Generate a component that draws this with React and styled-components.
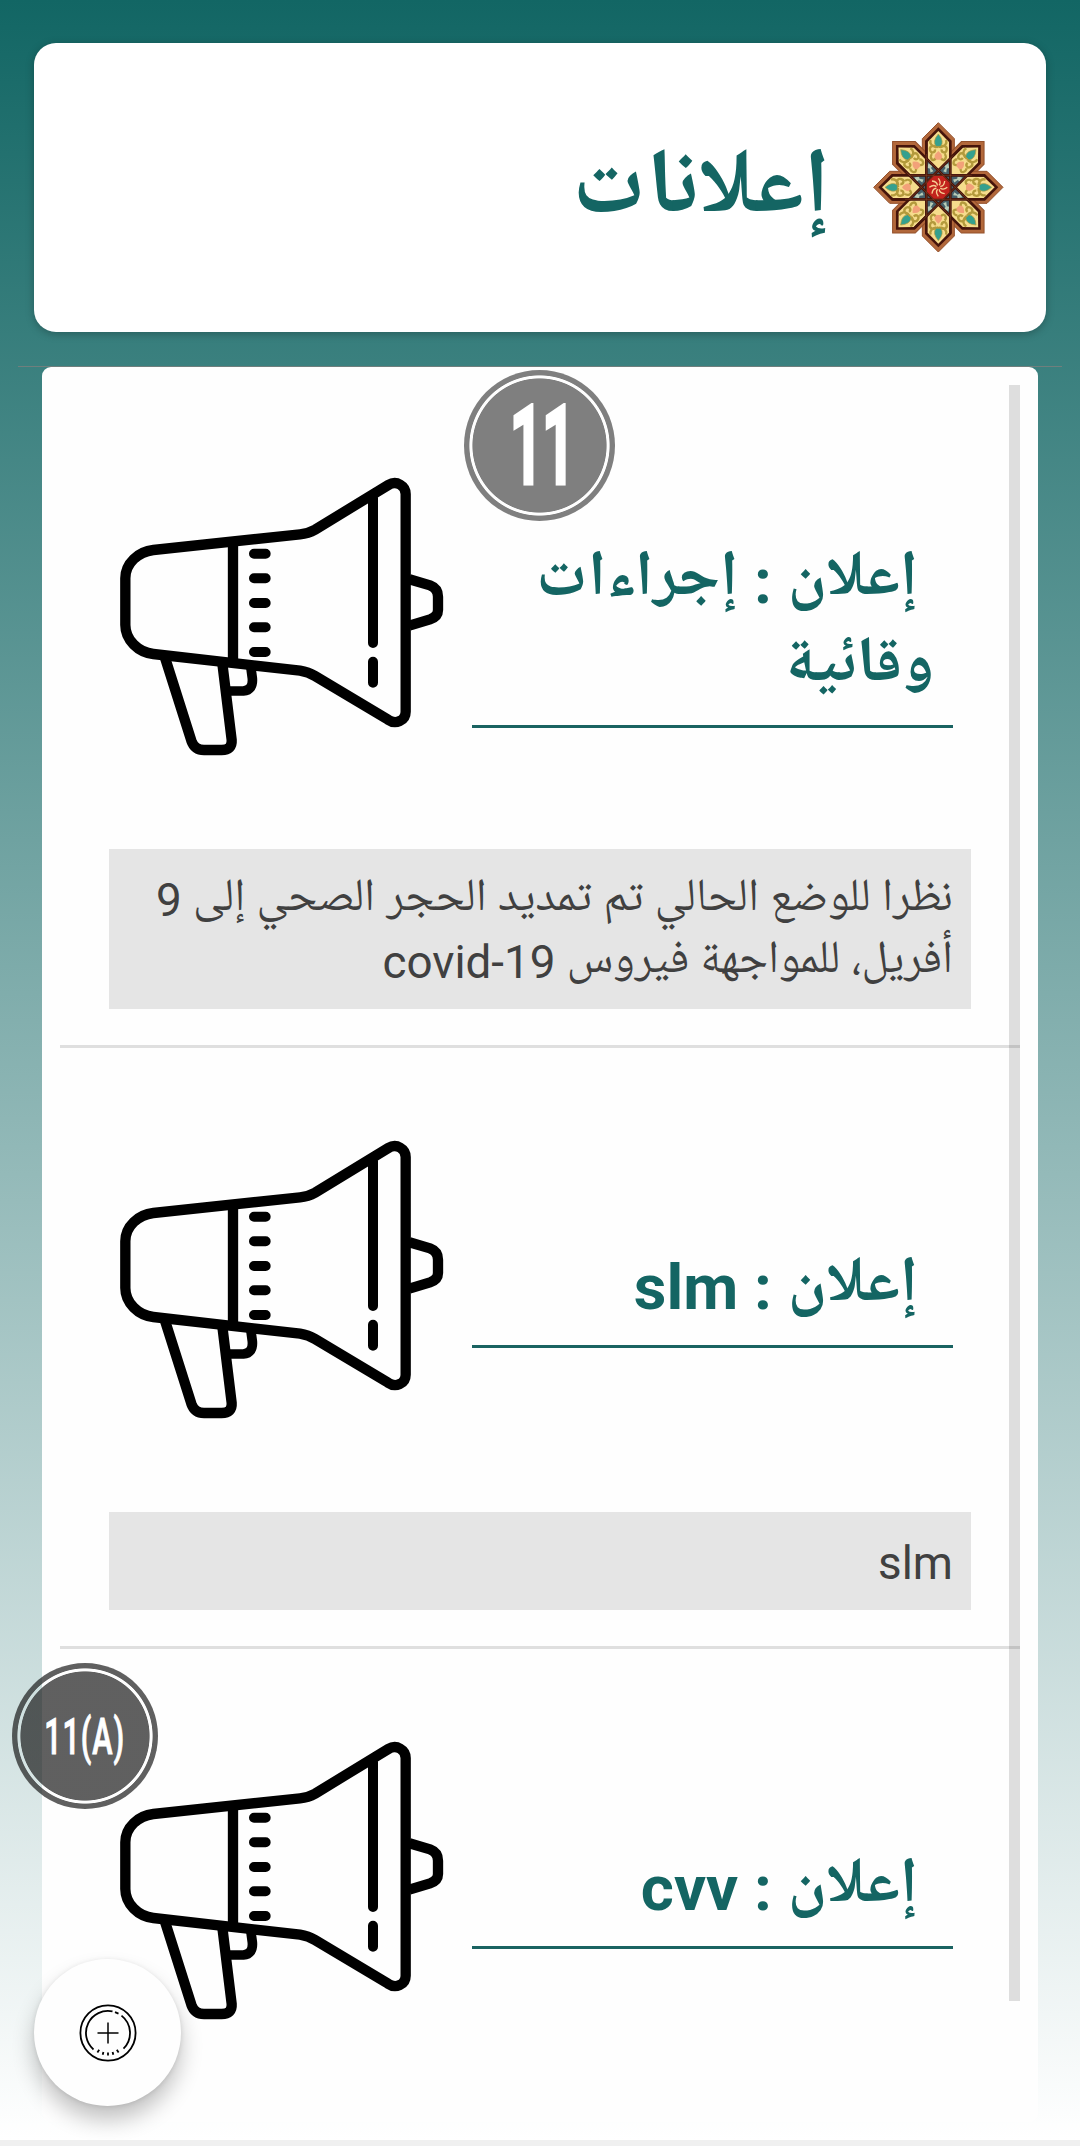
import React from "react";
import styled, { createGlobalStyle } from "styled-components";

const TEAL = "#146563";

const GlobalStyle = createGlobalStyle`
  * { box-sizing: border-box; }
  body { margin: 0; background: #f0f0f0; }
`;

const Page = styled.div`
  position: relative;
  display: flex;
  flex-direction: column;
  width: 1080px;
  height: 2146px;
  overflow: hidden;
  border-bottom: 6px solid #f0f0f0;
  background: linear-gradient(#126664, #ffffff);
  font-family: Roboto, "Noto Naskh Arabic", "Noto Sans Arabic", "DejaVu Sans", sans-serif;
`;

const Header = styled.header`
  display: flex;
  align-items: flex-start;
  gap: 30px;
  flex: none;
  height: 289px;
  margin: 43px 34px 0;
  padding: 67px 31px 0;
  border-radius: 22px;
  background: #fff;
  box-shadow: 0 2px 8px rgba(0, 0, 0, 0.25);
`;

const HeaderTitle = styled.h1`
  margin: 11px 0 0;
  color: ${TEAL};
  font-size: 92px;
  font-weight: 700;
  line-height: 120px;
`;

const Rule = styled.div`
  flex: none;
  height: 1px;
  margin: 34px 18px 0;
  background: #6f7f7d;
`;

const Panel = styled.main`
  position: relative;
  flex: none;
  height: 1755px;
  margin: 0 42px;
  padding: 18px 18px 0;
  border-radius: 9px;
  overflow: hidden;
  background: #fefefe;
`;

const ScrollThumb = styled.div`
  position: absolute;
  top: 18px;
  right: 18px;
  width: 11px;
  height: 1616px;
  background: rgba(0, 0, 0, 0.125);
`;

const Item = styled.article`
  display: flex;
  flex-direction: column;
  padding-top: 65px;
  border-bottom: 3px solid #dfdfdf;

  &:last-of-type {
    border-bottom: 0;
  }
`;

const ItemHead = styled.div`
  display: flex;
  align-items: center;
  gap: 12px;
  height: 320px;
  padding-right: 67px;
`;

const ItemTitle = styled.h2`
  width: 481px;
  margin: 0;
  padding: 47px 19px 14px 0;
  border-bottom: 3px solid #1a6361;
  color: ${TEAL};
  font-size: 63.5px;
  font-weight: 700;
  line-height: 86px;
`;

const Line = styled.div`
  padding-right: ${(p) => p.$indent || 0}px;
  white-space: pre;
`;

const Arabic = styled.span`
  font-size: ${(p) => p.$size}px;
  line-height: 0;
  vertical-align: ${(p) => p.$lift || 0}px;
`;

const Message = styled.div`
  margin: 79px 49px 36px;
  padding: 21px 18px 15px;
  background: #e5e5e5;
  color: #404040;
  font-size: 45.8px;
  line-height: 62px;
`;

const Badge = styled.div`
  position: absolute;
  left: ${(p) => p.$x}px;
  top: ${(p) => p.$y}px;
  display: flex;
  align-items: center;
  justify-content: center;
  width: ${(p) => p.$d}px;
  height: ${(p) => p.$d}px;
  border-radius: 50%;
  background: radial-gradient(
    circle closest-side,
    ${(p) => p.$color} calc(100% - 8.8px),
    transparent calc(100% - 8px),
    transparent calc(100% - 5.8px),
    ${(p) => p.$color} calc(100% - 5px)
  );
  color: #fff;
`;

const BadgeText = styled.span`
  font-size: ${(p) => p.$size}px;
  font-weight: ${(p) => p.$weight};
  line-height: 1;
  letter-spacing: ${(p) => p.$tracking || 0}px;
  transform: translate(${(p) => p.$dx || 0}px, 0.5px) scaleX(${(p) => p.$squeeze});
  white-space: nowrap;
  -webkit-text-stroke: ${(p) => p.$stroke}px #fff;
`;

const Fab = styled.button`
  position: absolute;
  left: 34px;
  top: 1959px;
  display: flex;
  align-items: center;
  justify-content: center;
  width: 147px;
  height: 147px;
  padding: 0;
  border: 0;
  border-radius: 50%;
  background: #fefefe;
  box-shadow: 0 14px 22px rgba(0, 0, 0, 0.24), 0 1px 5px rgba(0, 0, 0, 0.1);
`;

const Drawing = styled.svg`
  display: block;
  flex: none;
`;

function Megaphone() {
  return (
    <Drawing width="360" height="320" viewBox="0 0 1080 960" fill="none" stroke="#000" strokeWidth="31">
      <path d="M160 300L600 253Q625 250 645 239L865 105C890 90 917 108 917 132V785C917 812 887 825 864 809L645 678Q625 666 600 662L160 612C115 607 76 570 76 525V385C76 340 115 305 160 300Z" />
      <path d="M399 275V640" />
      <path strokeWidth="30" strokeLinecap="round" d="M462 311H497M462 385H497M462 459H497M462 532H497M462 606H497M819 145V579M819 635V698" />
      <path d="M928 388L990 406Q1014 415 1014 440V480Q1014 500 990 508L928 527" />
      <path d="M194 620L274 872Q284 900 312 900H365Q397 900 395 870L367 640" />
      <path strokeWidth="29" d="M383 723H430Q460 720 457 685L453 655" />
    </Drawing>
  );
}

const TURNS = [0, 45, 90, 135, 180, 225, 270, 315];

function Rosette() {
  return (
    <Drawing width="155" height="155" viewBox="-235 -232 465 465">
      {TURNS.map((a) => (
        <path key={a} transform={`rotate(${a})`} fill="#b2683b" stroke="#94502b" strokeWidth="3" d="M0-194L48-146V0H-48V-146Z" />
      ))}
      {TURNS.map((a) => (
        <path key={a} transform={`rotate(${a})`} fill="#45140b" d="M0-180L40-140V0H-40V-140Z" />
      ))}
      <circle r="86" fill="#45606a" />
      {TURNS.map((a) => (
        <g key={a} transform={`rotate(${a})`}>
          <path fill="#f6dc8c" d="M0-169L32-136V-84L0-50L-32-84V-136Z" />
          <path fill="none" stroke="#b39a3c" strokeWidth="7" d="M0-120C-14-128-28-124-25-112S-9-104-10-114M0-120C14-128 28-124 25-112S9-104 10-114M-7-88C-18-72-28-92-19-100M7-88C18-72 28-92 19-100M-6-120C-20-122-27-132-23-142M6-120C20-122 27-132 23-142" />
          <path fill="#35a08e" stroke="#b39a3c" strokeWidth="2" d="M0-160Q19-138 7-123H-7Q-19-138 0-160Z" />
          <path fill="#f2a179" d="M0-109Q19-93 6-83H-6Q-19-93 0-109Z" />
          <path fill="#b9cdb7" transform="rotate(22.5)" d="M0-78L8-66L2-62L5-50H-5L-2-62L-8-66Z" />
        </g>
      ))}
      {TURNS.map((a) => (
        <path key={a} transform={`rotate(${a})`} stroke="#45140b" strokeWidth="8" d="M-36-138V88" />
      ))}
      {TURNS.map((a) => (
        <path key={a} transform={`rotate(${a})`} stroke="#8a4a28" strokeWidth="1.5" d="M-36-100V88" />
      ))}
      <path fill="#c2231d" d="M-14-34H14L34-14V14L14 34H-14L-34 14V-14Z" />
      {TURNS.map((a) => (
        <path key={a} transform={`rotate(${a})`} fill="none" stroke="#f6cf94" strokeWidth="4" d="M2-6Q10-14 0-27" />
      ))}
    </Drawing>
  );
}

function AddIcon() {
  return (
    <Drawing width="60" height="60" viewBox="-30 -30 60 60" fill="none" stroke="#000">
      <circle r="27.6" strokeWidth="1.8" />
      <path strokeWidth="1.8" d="M4.5-21.6A22 22 0 0 0-14.5 16.5M13.5-17.4A22 22 0 0 1 15.5 15.6M7-20.9L10.5-19.4" />
      <path strokeWidth="1.5" d="M-10.5 0H10.5M0-10.5V10.5" />
      <path strokeWidth="1.8" d="M0 19.5V22.5M-4.6 19L-5.3 21.8M4.6 19L5.3 21.8M-8.8 16.8L-10.6 19.4M8.8 16.8L10.6 19.4" />
    </Drawing>
  );
}

function Announcement({ title, children }) {
  return (
    <Item>
      <ItemHead>
        <ItemTitle>{title}</ItemTitle>
        <Megaphone />
      </ItemHead>
      {children && <Message>{children}</Message>}
    </Item>
  );
}

const TitleWord = ({ children }) => <Arabic $size={64} $lift={8}>{children}</Arabic>;
const BodyWords = ({ children }) => <Arabic $size={45.9} $lift={6}>{children}</Arabic>;

export default function App() {
  return (
    <>
      <GlobalStyle />
      <Page dir="rtl">
        <Header>
          <Rosette />
          <HeaderTitle>إعلانات</HeaderTitle>
        </Header>
        <Rule />
        <Panel>
          <Announcement
            title={
              <>
                <Line $indent={16}><TitleWord>إعلان</TitleWord> : <TitleWord>إجراءات</TitleWord></Line>
                <Line><TitleWord>وقائية</TitleWord></Line>
              </>
            }
          >
            <Line><BodyWords>نظرا للوضع الحالي تم تمديد الحجر الصحي إلى</BodyWords> 9</Line>
            <Line><BodyWords>أفريل، للمواجهة فيروس</BodyWords> covid-19</Line>
          </Announcement>
          <Announcement title={<Line $indent={16}><TitleWord>إعلان</TitleWord> : slm</Line>}>
            <Line>slm</Line>
          </Announcement>
          <Announcement title={<Line $indent={16}><TitleWord>إعلان</TitleWord> : cvv</Line>} />
          <ScrollThumb />
        </Panel>
        <Badge dir="ltr" $x={464} $y={369.5} $d={151} $color="#7f7f7f">
          <BadgeText $size={111} $weight={700} $squeeze={0.53} $stroke={3} $tracking={-3} $dx={2}>11</BadgeText>
        </Badge>
        <Badge dir="ltr" $x={11.5} $y={1662.5} $d={146} $color="rgba(18, 18, 18, 0.67)">
          <BadgeText $size={50} $weight={500} $squeeze={0.61} $stroke={1} $tracking={1.5} $dx={0.5}>11(A)</BadgeText>
        </Badge>
        <Fab aria-label="إضافة">
          <AddIcon />
        </Fab>
      </Page>
    </>
  );
}
